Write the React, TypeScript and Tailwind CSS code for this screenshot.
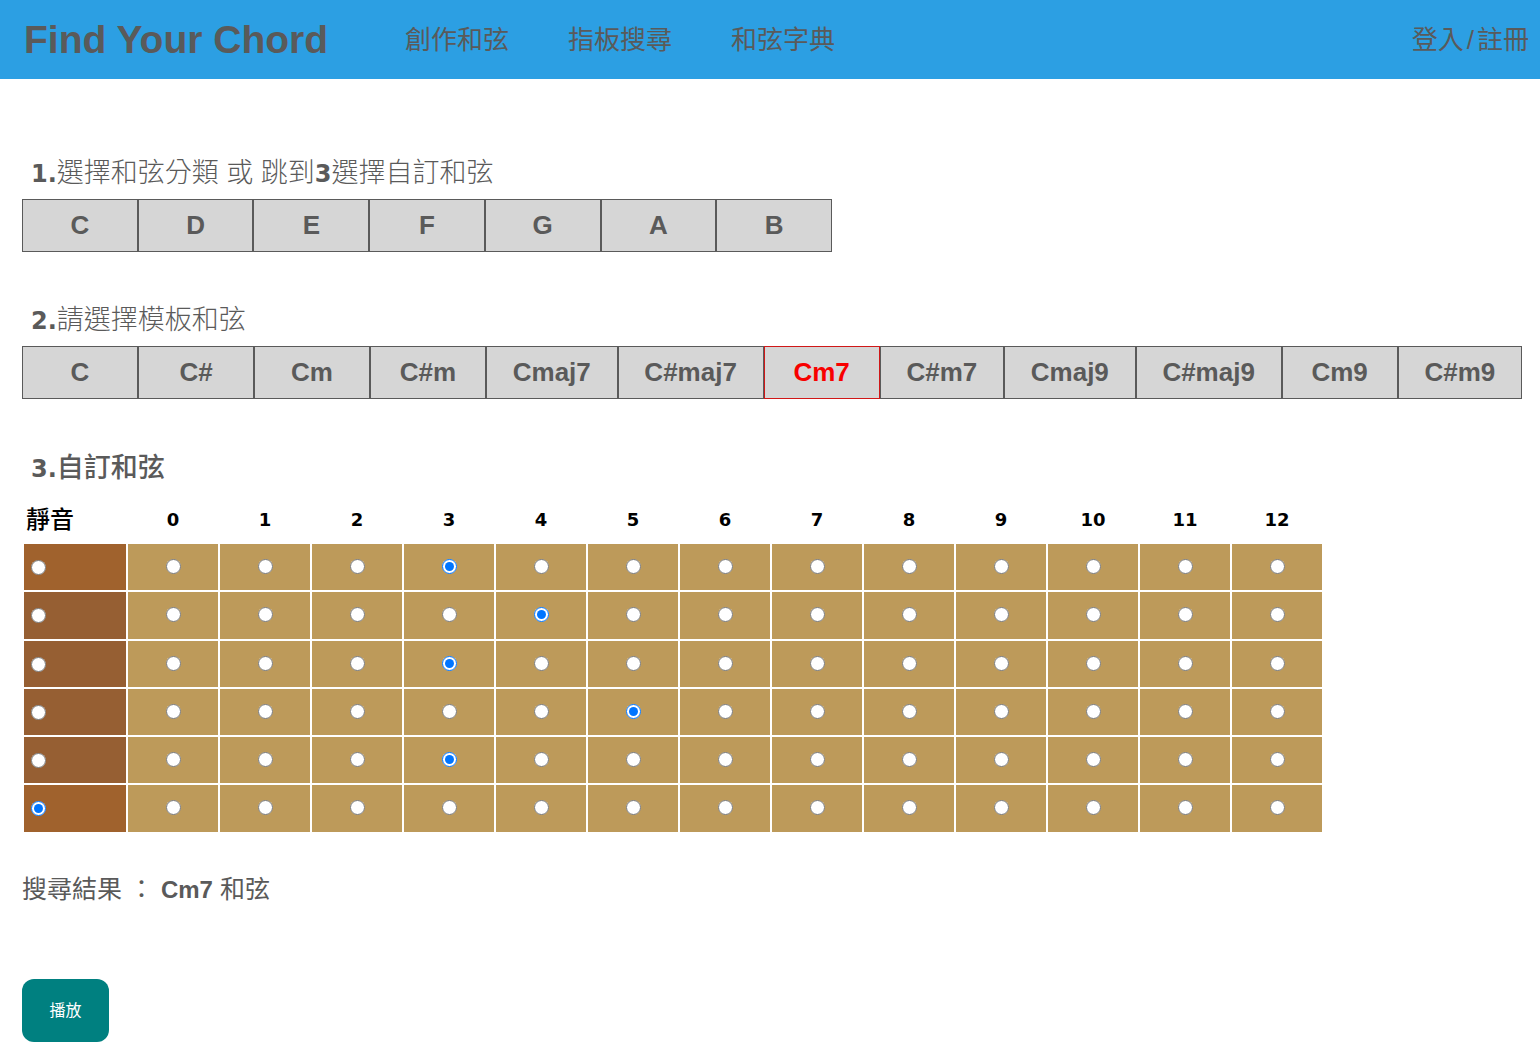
import { useState } from "react";

const roots = ["C", "D", "E", "F", "G", "A", "B"];

const templates = [
  "C", "C#", "Cm", "C#m", "Cmaj7", "C#maj7",
  "Cm7", "C#m7", "Cmaj9", "C#maj9", "Cm9", "C#m9",
];

const frets = [0, 1, 2, 3, 4, 5, 6, 7, 8, 9, 10, 11, 12];

const MUTED = -1;

const strings = [
  { id: 1, height: "h-[46px]", mute: "bg-[#a0622d]" },
  { id: 2, height: "h-[47px]", mute: "bg-[#965f33]" },
  { id: 3, height: "h-[46px]", mute: "bg-[#965f33]" },
  { id: 4, height: "h-[46px]", mute: "bg-[#965f33]" },
  { id: 5, height: "h-[46px]", mute: "bg-[#965f33]" },
  { id: 6, height: "h-[47px]", mute: "bg-[#a0622d]" },
];

const headingClass = "h-[47px] pl-[9px] text-[27px] leading-[42px]";

function Header() {
  return (
    <header className="flex h-[79px] items-center bg-[#2c9fe3] pr-[11px] pl-[24px]">
      <h1 className="text-[39px] leading-none font-bold whitespace-nowrap">Find Your Chord</h1>
      <nav className="ml-[77px] flex gap-[59px] text-[26px] leading-none whitespace-nowrap">
        <a href="#create">創作和弦</a>
        <a href="#search">指板搜尋</a>
        <a href="#dictionary">和弦字典</a>
      </nav>
      <a href="#login" className="ml-auto text-[26px] leading-none whitespace-nowrap">
        登入<span className="px-[3px]">/</span>註冊
      </a>
    </header>
  );
}

function Numeral({ children }: { children: string }) {
  return <b className="font-['DejaVu_Sans',sans-serif] text-2xl leading-none font-bold">{children}</b>;
}

function ChordButton({ name, className, active, onClick }: {
  name: string;
  className: string;
  active: boolean;
  onClick: () => void;
}) {
  return (
    <button
      type="button"
      aria-pressed={active}
      onClick={onClick}
      className={`h-[53px] cursor-pointer border bg-[#d6d6d6] text-[26px] font-bold ${className} ${
        active ? "border-[#d01818] text-[#f80000]" : "border-[#5a5a5a]"
      }`}
    >
      {name}
    </button>
  );
}

export default function App() {
  const [root, setRoot] = useState("");
  const [template, setTemplate] = useState("Cm7");
  const [chosen, setChosen] = useState([3, 4, 3, 5, 3, MUTED]);

  const choose = (row: number, fret: number) =>
    setChosen(chosen.map((value, i) => (i === row ? fret : value)));

  return (
    <div className="min-h-screen bg-white font-['Liberation_Sans','Noto_Sans_CJK_TC',sans-serif] text-[#5a5a5a]">
      <Header />
      <main className="pt-[73px] pr-[18px] pb-3 pl-[22px]">
        <section>
          <h2 className={`${headingClass} font-light`}>
            <Numeral>1.</Numeral>選擇和弦分類 或 跳到<Numeral>3</Numeral>選擇自訂和弦
          </h2>
          <div className="flex max-w-[810px]">
            {roots.map((name) => (
              <ChordButton key={name} name={name} className="flex-1" active={root === name} onClick={() => setRoot(name)} />
            ))}
          </div>
        </section>

        <section className="mt-[47px]">
          <h2 className={`${headingClass} font-light`}>
            <Numeral>2.</Numeral>請選擇模板和弦
          </h2>
          <div className="flex flex-wrap">
            {templates.map((name) => (
              <ChordButton
                key={name}
                name={name}
                className="min-w-[116px] flex-auto px-6"
                active={template === name}
                onClick={() => setTemplate(name)}
              />
            ))}
          </div>
        </section>

        <section className="mt-12">
          <h2 className={`${headingClass} font-medium`}>
            <Numeral>3.</Numeral>自訂和弦
          </h2>
          <table className="table-fixed border-separate border-spacing-[2px]">
            <thead>
              <tr className="h-[46px] text-black">
                <th scope="col" className="w-[102px] pt-[2px] pl-[2px] text-left text-2xl font-medium">靜音</th>
                {frets.map((fret) => (
                  <th key={fret} scope="col" className="w-[90px] pt-[2px] font-['DejaVu_Sans',sans-serif] text-lg font-bold">
                    {fret}
                  </th>
                ))}
              </tr>
            </thead>
            <tbody>
              {strings.map((string, row) => (
                <tr key={string.id} className={string.height}>
                  <td className={`pl-[7px] ${string.mute}`}>
                    <input
                      type="radio"
                      name={`string-${string.id}`}
                      aria-label={`第${string.id}弦 靜音`}
                      checked={chosen[row] === MUTED}
                      onChange={() => choose(row, MUTED)}
                      className="block size-[15px]"
                    />
                  </td>
                  {frets.map((fret) => (
                    <td key={fret} className="bg-[#bd9a5a] pb-[2px]">
                      <input
                        type="radio"
                        name={`string-${string.id}`}
                        aria-label={`第${string.id}弦 ${fret}`}
                        checked={chosen[row] === fret}
                        onChange={() => choose(row, fret)}
                        className="mx-auto block size-[15px]"
                      />
                    </td>
                  ))}
                </tr>
              ))}
            </tbody>
          </table>
        </section>

        <p className="mt-[35px] text-[25px] leading-[40px]">
          搜尋結果 ： <b className="text-2xl">{template}</b> 和弦
        </p>

        <button
          type="button"
          className="mt-[70px] h-[63px] min-w-[87px] cursor-pointer rounded-xl bg-[#008080] px-6 text-base text-white"
        >
          播放
        </button>
      </main>
    </div>
  );
}
